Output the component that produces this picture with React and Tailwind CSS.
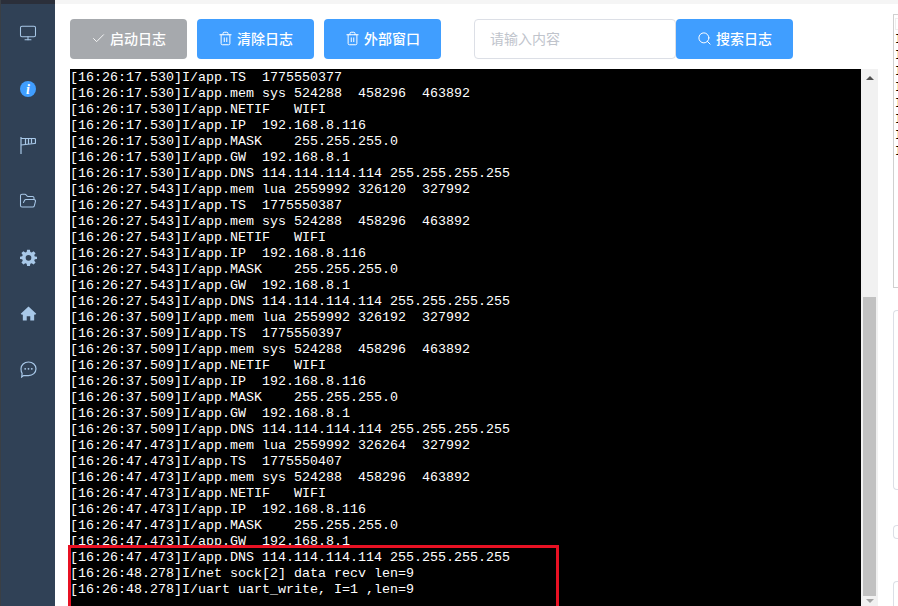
import React from 'react';
import { Monitor, Check, Trash2, Search, FolderOpen } from 'lucide-react';

const block = (time, ts, lua) => [
    lua && [time, `I/app.mem lua 2559992 ${lua}  327992`],
    [time, `I/app.TS  ${ts}`],
    [time, 'I/app.mem sys 524288  458296  463892'],
    [time, 'I/app.NETIF   WIFI'],
    [time, 'I/app.IP  192.168.8.116'],
    [time, 'I/app.MASK    255.255.255.0'],
    [time, 'I/app.GW  192.168.8.1'],
    [time, 'I/app.DNS 114.114.114.114 255.255.255.255'],
].filter(Boolean);

const logLines = [
    ...block('16:26:17.530', '1775550377'),
    ...block('16:26:27.543', '1775550387', '326120'),
    ...block('16:26:37.509', '1775550397', '326192'),
    ...block('16:26:47.473', '1775550407', '326264'),
    ['16:26:48.278', 'I/net sock[2] data recv len=9'],
    ['16:26:48.278', 'I/uart uart_write, I=1 ,len=9'],
];

const sideRows = [0, 1, 2, 3, 4, 5, 6, 7];

const ActionBtn = ({ icon, label, gray }) => (
    <button className={`flex items-center justify-center gap-1 w-[117px] h-10 pb-[2px] rounded text-sm font-medium text-white ${gray ? 'bg-[#a6a9ad]' : 'bg-[#409eff]'}`}>
        {icon}
        <span>{label}</span>
    </button>
);

const SideIcon = ({ children }) => (
    <div className="flex items-center justify-center h-14 text-[#a8c8e8]">{children}</div>
);

const App = () => {
    return (
        <div className="relative flex w-[898px] h-[606px] overflow-hidden bg-white" style={{ fontFamily: '"Noto Sans CJK SC", "Liberation Sans", sans-serif' }}>
            <div className="flex flex-col w-[55px] shrink-0 bg-[#304156] border-l border-[#3a3f45]">
                <div className="h-1 bg-[#2b2f3a] shrink-0"></div>
                <div className="flex flex-col pt-[1px]">
                    <SideIcon><Monitor size={18} strokeWidth={1.4} /></SideIcon>
                    <SideIcon>
                        <div className="flex items-center justify-center w-4 h-4 rounded-full bg-[#409eff] text-white text-[14px] italic font-bold" style={{ fontFamily: '"Liberation Serif", serif' }}>i</div>
                    </SideIcon>
                    <SideIcon>
                        <svg width="16" height="17" viewBox="0 0 16 17" fill="none" stroke="currentColor" strokeWidth="1.2">
                            <path d="M1 0v17" />
                            <path d="M1 1.500h13.500a1 1 0 0 1 1 1v3a1 1 0 0 1-1 1L1 8" />
                            <path d="M5.500 1.500v6M8.500 1.500v5.500M11.500 1.500v5" />
                        </svg>
                    </SideIcon>
                    <SideIcon><FolderOpen size={18} strokeWidth={1.4} /></SideIcon>
                    <SideIcon>
                        <svg width="17" height="17" viewBox="0 0 24 24" fill="currentColor">
                            <path fillRule="evenodd" d="M10 1h4l.6 3.200 1.900.8 2.700-1.900 2.800 2.800-1.900 2.700.8 1.900L24 11v3l-3.100.6-.8 1.900 1.900 2.700-2.800 2.800-2.700-1.900-1.900.8L14 24h-4l-.6-3.100-1.900-.8-2.700 1.900L2 19.200l1.900-2.700-.8-1.900L0 14v-3l3.100-.6.8-1.900L2 5.800 4.800 3l2.700 1.900 1.900-.8zM12 8.500a4 4 0 100 8 4 4 0 000-8z" />
                        </svg>
                    </SideIcon>
                    <SideIcon>
                        <svg width="17" height="17" viewBox="0 0 24 24" fill="currentColor">
                            <path d="M12 2 1 12.500 3 14l1-.9V22h5.500v-6h5v6H20v-8.900l1 .9 2-1.500z" />
                        </svg>
                    </SideIcon>
                    <SideIcon>
                        <svg width="17" height="17" viewBox="0 0 17 17" fill="none" stroke="currentColor" strokeWidth="1.200">
                            <path d="M8.500 1C12.800 1 16 4 16 7.800s-3.200 6.800-7.500 6.800H3.600L1.700 16l.4-3.700C1.200 11 1 9.500 1 7.800 1 4 4.200 1 8.500 1z" />
                            <circle cx="5.200" cy="7.800" r=".9" fill="currentColor" stroke="none" />
                            <circle cx="8.500" cy="7.800" r=".9" fill="currentColor" stroke="none" />
                            <circle cx="11.800" cy="7.800" r=".9" fill="currentColor" stroke="none" />
                        </svg>
                    </SideIcon>
                </div>
            </div>
            <div className="flex flex-col flex-1 min-w-0">
                <div className="h-1 shrink-0 bg-[#f5f5f5]"></div>
                <div className="flex flex-1 min-h-0">
                    <div className="flex flex-col w-[838px] shrink-0 pl-[15px] pt-[15px]">
                        <div className="flex items-center h-10 shrink-0">
                            <ActionBtn gray icon={<Check size={15} strokeWidth={1.4} />} label="启动日志" />
                            <div className="w-[10px]"></div>
                            <ActionBtn icon={<Trash2 size={15} strokeWidth={1.6} />} label="清除日志" />
                            <div className="w-[10px]"></div>
                            <ActionBtn icon={<Trash2 size={15} strokeWidth={1.6} />} label="外部窗口" />
                            <div className="flex items-center w-[202px] h-10 ml-[33px] pl-[15px] pb-[2px] bg-white border border-[#dcdfe6] rounded text-sm text-[#c0c4cc]">请输入内容</div>
                            <ActionBtn icon={<Search size={15} strokeWidth={1.6} />} label="搜索日志" />
                        </div>
                        <div className="flex flex-1 min-h-0 w-[808px] mt-[10px]">
                            <div className="flex-1 min-w-0 bg-black pt-[1px] overflow-hidden">
                                {logLines.map(([time, text], index) => (
                                    <div key={index} className="h-4 leading-4 text-[13.33px] text-white whitespace-pre" style={{ fontFamily: '"Liberation Mono", monospace' }}>[{time}]{text}</div>
                                ))}
                            </div>
                            <div className="flex flex-col items-center w-[17px] shrink-0 bg-[#f1f1f1]">
                                <div className="flex items-center justify-center h-[17px] shrink-0">
                                    <div className="w-0 h-0 border-x-4 border-b-4 border-x-transparent border-b-[#505050]"></div>
                                </div>
                                <div className="flex-1 min-h-0 w-full flex flex-col">
                                    <div className="h-[211px] shrink-0"></div>
                                    <div className="flex-1 mx-[2px] bg-[#c1c1c1]"></div>
                                </div>
                                <div className="flex items-center justify-center h-[10px] shrink-0">
                                    <div className="w-0 h-0 border-x-4 border-t-4 border-x-transparent border-t-[#a3a3a3]"></div>
                                </div>
                            </div>
                        </div>
                    </div>
                    <div className="flex flex-col flex-1 min-w-0 pt-[10px]">
                        <div className="flex flex-col h-[274px] shrink-0 pl-[1px] pt-[3px] border border-r-0 border-[#d0d0d0] overflow-hidden">
                            <div className="h-[12px] shrink-0 border border-r-0 border-[#eeeeee]"></div>
                            <div className="flex flex-col pt-[2px]">
                                {sideRows.map((row) => (
                                    <div key={row} className="h-4 leading-4 text-xs text-black" style={{ fontFamily: '"Liberation Mono", monospace' }}>I</div>
                                ))}
                            </div>
                        </div>
                        <div className="h-[180px] shrink-0 mt-[22px] border border-r-0 border-[#dcdfe6] rounded-l"></div>
                        <div className="h-[14px] shrink-0 mt-[35px] border border-r-0 border-[#dcdfe6] rounded-l-sm"></div>
                        <div className="flex-1 mt-[42px] border border-r-0 border-b-0 border-[#dcdfe6] rounded-tl"></div>
                    </div>
                </div>
            </div>
            <div className="absolute left-[68px] top-[545px] w-[491px] h-[70px] border-[3px] border-[#e81123]"></div>
        </div>
    );
};

export default App;
